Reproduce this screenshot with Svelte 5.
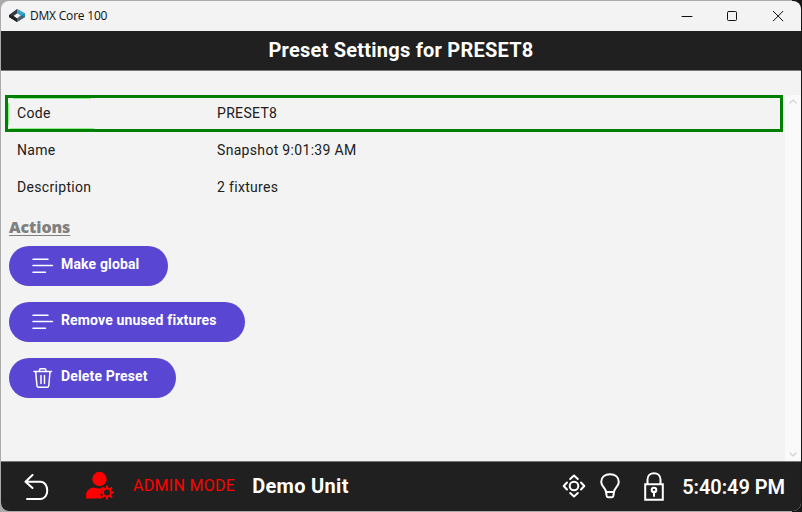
<script>
  const fields = [
    { label: 'Code', value: 'PRESET8', selected: true },
    { label: 'Name', value: 'Snapshot 9:01:39 AM' },
    { label: 'Description', value: '2 fixtures' }
  ];
  const actions = [
    { label: 'Make global', icon: 'lines', size: 'small' },
    { label: 'Remove unused fixtures', icon: 'lines', size: 'large' },
    { label: 'Delete Preset', icon: 'trash', size: 'medium' }
  ];
</script>

<div class="desktop">
  <div class="window">
    <div class="titlebar">
      <svg class="logo" width="16" height="14" viewBox="0 0 16 14">
        <path d="M8 0 0 6v2l8 5V9.5L4.5 7 8 4.5Z" fill="#343a3f" />
        <path d="M8 0l8 4.5V8l-8 5V9.5l4-3L8 4Z" fill="#1787b4" />
        <path d="m8 0 8 4.5-4 2L8 4Z" fill="#35a5d0" />
        <path d="m0 6 4.5 1L8 9.5V13L0 8Z" fill="#202326" />
        <path d="m8 9.500 4-3 4 1.500-8 5Z" fill="#52606a" />
      </svg>
      <span class="app-name">DMX Core 100</span>
      <div class="controls">
        <svg width="12" height="12" viewBox="0 0 12 12"><path d="M1 6.500h10" /></svg>
        <svg width="12" height="12" viewBox="0 0 12 12"><rect x="1.500" y="1.500" width="9" height="9" rx="1" /></svg>
        <svg width="12" height="12" viewBox="0 0 12 12"><path d="m1.300 1.300 9.600 9.600m0-9.600-9.600 9.600" /></svg>
      </div>
    </div>
    <header><h1>Preset Settings for PRESET8</h1></header>
    <main>
      <div class="content">
        {#each fields as f}
          <div class="row" class:selected={f.selected}>
            <span class="label">{f.label}</span><span class="value">{f.value}</span>
          </div>
        {/each}
        <h2>Actions</h2>
        {#each actions as a}
          <button class={a.size}>
            {#if a.icon === 'lines'}
              <svg width="22" height="20" viewBox="0 0 22 20"><path d="M1 3.200h15M1 9.500H20.500M1 16.300H13.500" /></svg>
            {:else}
              <svg width="22" height="20" viewBox="0 0 22 20"><path d="M2 3.500h17.500M7.500 3.300V2q0-1.200 1.200-1.200h4q1.200 0 1.200 1.200v1.300M3.700 3.800l1.200 13.700q.2 1.800 1.800 1.800h8.300q1.600 0 1.800-1.800l1.200-13.700M9 7.500v8m3.500-8v8" /></svg>
            {/if}
            <span>{a.label}</span>
          </button>
        {/each}
      </div>
      <div class="scrollbar">
        <svg width="8" height="5" viewBox="0 0 8 5"><path d="m1 4 3-3 3 3" /></svg>
        <svg width="8" height="5" viewBox="0 0 8 5"><path d="m1 1 3 3 3-3" /></svg>
      </div>
    </main>
    <footer>
      <svg class="back" width="26" height="28" viewBox="0 0 26 28"><path d="M8.500 1 1.500 7.700l7 6.300M1.800 7.700h14.500c9 0 9.500 17.300 0 17.300H3" /></svg>
      <svg class="admin" width="30" height="30" viewBox="0 0 30 30">
        <circle cx="14.500" cy="8" r="7.200" />
        <path d="M1 27.500v-3c0-5 4-8 8-8q5 2.200 10 0l1 .3-4 3.200-.5 4 1 3.500Z" />
        <circle cx="22" cy="21.500" r="4" fill="none" stroke="red" stroke-width="2" />
        <path d="M22 14.500v3m0 8v3m-7-7h3m8 0h3m-12-5 2 2m6 6 2 2m0-10-2 2m-6 6-2 2" stroke="red" stroke-width="2" />
      </svg>
      <span class="mode">ADMIN MODE</span>
      <span class="unit">Demo Unit</span>
      <div class="status">
        <svg class="target" width="24" height="24" viewBox="0 0 24 24"><circle cx="12" cy="12" r="4.300" /><path d="m8.200 5 3.800-3.500L15.800 5M8.200 19l3.800 3.500 3.800-3.500M5 8.500 1.700 12l3.300 3.500M19 8.500l3.300 3.500-3.300 3.500" /></svg>
        <svg class="bulb" width="20" height="26" viewBox="0 0 20 26"><path d="M6 19c0-4-4.800-5.500-4.800-10C1.200 4 5 1.200 10 1.200S18.800 4 18.800 9C18.800 13.500 14 15 14 19ZM6 19l.7 4q.3 1.200 1.500 1.200h3.600q1.200 0 1.500-1.200l.7-4" /></svg>
        <svg class="lock" width="20" height="30" viewBox="0 0 20 30"><path stroke-linejoin="miter" d="M1.200 12.200h17.600v15.600H1.200ZM3.500 12V7.500C3.500-1 16.500-1 16.500 7.500V12" /><circle cx="10" cy="18" r="2.300" /><path d="M10 19.500V24" /></svg>
        <span class="time">5:40:49 PM</span>
      </div>
    </footer>
  </div>
</div>

<style>
  :global(body) { margin: 0; overflow: hidden; }
  * { box-sizing: border-box; }
  .desktop { width: 802px; height: 512px; padding: 1px; background: linear-gradient(#161616, #161616) right / 10px 100% no-repeat, #aaa; }
  .window { width: 800px; height: 510px; border-radius: 8px; overflow: hidden; background: #f3f3f3; display: flex; flex-direction: column; font-family: Roboto, sans-serif; }
  svg { display: block; flex: none; fill: none; stroke-linecap: round; stroke-linejoin: round; }
  span { white-space: nowrap; }
  .titlebar { height: 30px; display: flex; align-items: center; padding-left: 8px; flex: none; }
  .app-name { margin-left: 5px; font: 12px/16px "Open Sans", sans-serif; color: #111; letter-spacing: -.2px; }
  .controls { display: flex; gap: 34px; margin-left: auto; margin-right: 17px; stroke: #111; stroke-width: 1; }
  .controls svg:first-child { margin-right: -1px; }
  header { height: 40px; flex: none; border-bottom: 1px solid #777; background: #202020; display: flex; justify-content: center; }
  h1 { margin: 0; font-size: 20px; line-height: 38px; font-weight: 700; letter-spacing: .23px; color: #fff; white-space: nowrap; }
  main { display: flex; height: 390px; padding-top: 24px; flex: none; }
  .content { width: 784px; display: flex; flex-direction: column; align-items: flex-start; padding-left: 4px; }
  .row { width: 778px; height: 37px; display: flex; align-items: center; padding: 0 12px 1px; font-size: 14px; letter-spacing: .32px; color: #202020; }
  .selected { border: 3px solid #008000; padding: 0 9px 1px; background: linear-gradient(#90ee90, #90ee90) 5px 0 / 78px 1px no-repeat, linear-gradient(#90ee90, #90ee90) 2px 100% / 84px 1px no-repeat, linear-gradient(#90ee90, #90ee90) 0 5px / 1px 22px no-repeat; }
  .label { width: 200px; }
  h2 { margin: 11px 0 8px 4px; font: 800 16px/21px "Open Sans", sans-serif; letter-spacing: -.1px; color: #808080; text-decoration: underline; text-decoration-thickness: 1px; text-underline-offset: 2px; }
  button { height: 40px; flex: none; margin: 0 0 16px 4px; padding: 0 0 0 23px; border: 0; border-radius: 20px; background: #5946d2; color: #fff; display: flex; align-items: center; gap: 7px; font: 700 14px/20px Roboto, sans-serif; letter-spacing: .15px; }
  button svg { stroke: #fff; stroke-width: 1.500; }
  button span { margin-top: -4px; }
  .small { width: 159px; }
  .large { width: 236px; }
  .medium { width: 167px; }
  .scrollbar { width: 16px; background: #fafafa; display: flex; flex-direction: column; align-items: center; justify-content: space-between; padding: 4px 0; stroke: #d2d2d2; stroke-width: 1.200; }
  footer { height: 50px; padding-bottom: 1px; border-top: 1px solid #777; background: #202020; display: flex; align-items: center; color: #fff; flex: none; }
  .back { margin-left: 23px; margin-top: 3px; stroke: #fff; stroke-width: 2; }
  .admin { margin-left: 35px; fill: red; stroke-linecap: butt; }
  .mode { margin: -1px 0 0 18px; color: #f00; font-size: 16px; letter-spacing: .3px; }
  .unit { margin-left: 17px; font-size: 20px; font-weight: 700; letter-spacing: .3px; }
  .status { display: flex; align-items: center; margin-left: auto; padding-right: 16px; stroke: #fff; stroke-width: 2; }
  .bulb { margin-left: 14px; }
  .lock { margin: 1px 0 0 24px; }
  .time { margin-top: 2px; margin-left: 18px; font-size: 20px; font-weight: 600; letter-spacing: -.05px; }
</style>
